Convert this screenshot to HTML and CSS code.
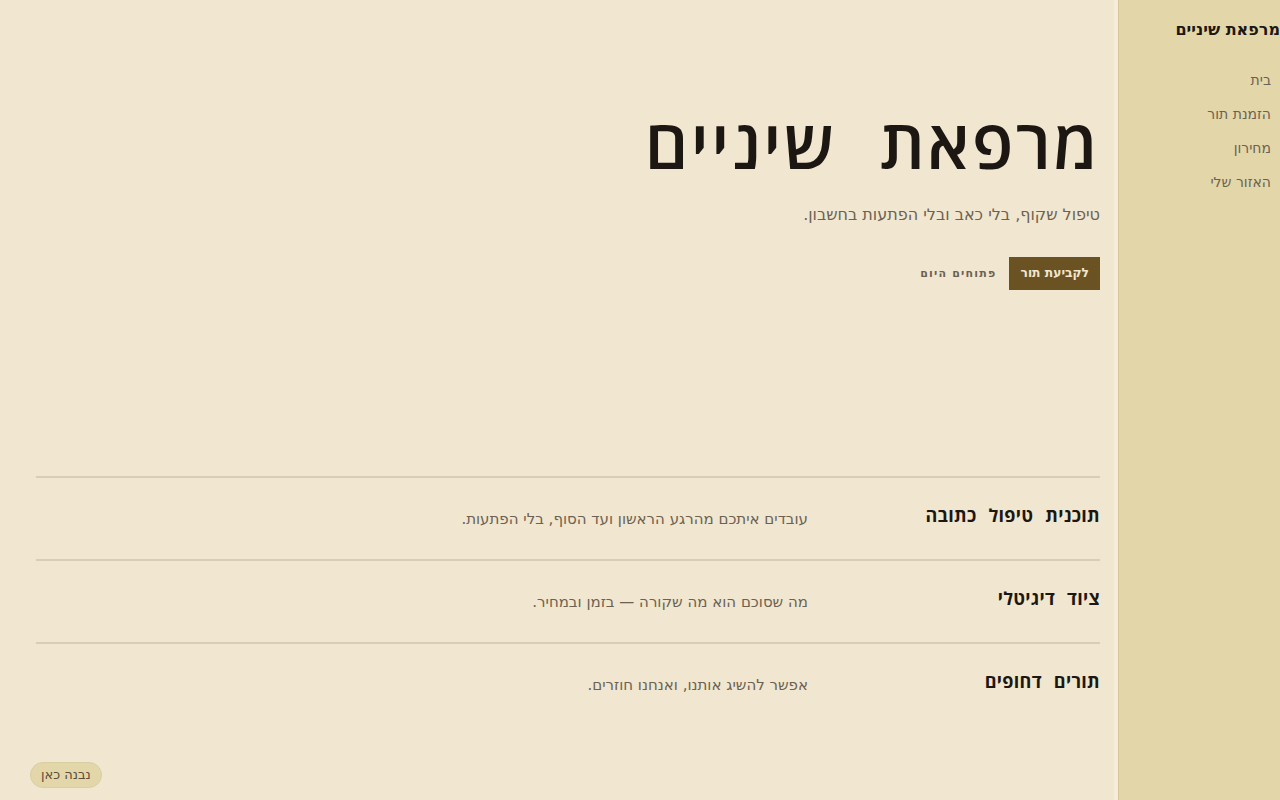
FILE: index.html
```html
<!DOCTYPE html>
<html lang="he" dir="rtl">
<head>
<meta charset="utf-8">
<title>מרפאת שיניים</title>
<link rel="stylesheet" href="styles.css">
</head>
<body>
<div class="layout">
  <aside class="sidebar">
    <div class="brand">מרפאת שיניים</div>
    <nav class="nav">
      <a href="#">בית</a>
      <a href="#">הזמנת תור</a>
      <a href="#">מחירון</a>
      <a href="#">האזור שלי</a>
    </nav>
  </aside>
  <main class="main">
    <section class="hero">
      <h1 class="hero-title">מרפאת שיניים</h1>
      <p class="hero-sub">טיפול שקוף, בלי כאב ובלי הפתעות בחשבון.</p>
      <div class="hero-actions">
        <a class="btn" href="#">לקביעת תור</a>
        <span class="open">פתוחים היום</span>
      </div>
    </section>
    <section class="features">
      <div class="row">
        <h3 class="row-title">תוכנית טיפול כתובה</h3>
        <p class="row-text">עובדים איתכם מהרגע הראשון ועד הסוף, בלי הפתעות.</p>
      </div>
      <div class="row">
        <h3 class="row-title">ציוד דיגיטלי</h3>
        <p class="row-text">מה שסוכם הוא מה שקורה — בזמן ובמחיר.</p>
      </div>
      <div class="row">
        <h3 class="row-title">תורים דחופים</h3>
        <p class="row-text">אפשר להשיג אותנו, ואנחנו חוזרים.</p>
      </div>
    </section>
  </main>
</div>
<div class="built">נבנה כאן</div>
</body>
</html>
```
FILE: styles.css
```css
* { box-sizing: border-box; }
html, body { margin: 0; padding: 0; }
body {
  font-family: "DejaVu Sans", sans-serif;
  background: #f1e6cf;
  color: #1c1712;
  height: 800px;
  overflow: hidden;
}
.layout {
  display: flex;
  flex-direction: row;
  height: 800px;
}
.sidebar {
  width: 162px;
  flex: 0 0 162px;
  background: #e3d6a9;
  border-left: 1px solid #d5c89f;
  box-shadow: -4px 0 0 #f5ecda;
  padding: 19px 9px 0 0;
}
.brand {
  font-size: 16px;
  font-weight: 700;
  color: #1c1712;
  margin-right: -9px;
  line-height: 22px;
  white-space: nowrap;
}
.nav {
  display: flex;
  flex-direction: column;
  margin-top: 29px;
  gap: 14px;
}
.nav a {
  font-size: 14px;
  line-height: 20px;
  color: #6b6253;
  text-decoration: none;
}
.main {
  flex: 1;
  padding: 0 18px 0 36px;
}
.hero {
  padding-top: 98px;
  height: 476px;
}
.hero-title {
  margin: 0;
  font-family: "Open Sans", "DejaVu Sans", sans-serif;
  font-size: 68px;
  font-weight: 600;
  letter-spacing: 0.035em;
  word-spacing: 0.34em;
  line-height: 90px;
  color: #1c1712;
}
.hero-sub {
  margin: 0;
  margin-top: 15px;
  font-size: 16px;
  line-height: 24px;
  color: #6b6253;
}
.hero-actions {
  display: flex;
  align-items: center;
  gap: 13px;
  margin-top: 30px;
}
.btn {
  display: inline-block;
  background: #6b5223;
  color: #f1e6cf;
  font-size: 12.3px;
  font-weight: 700;
  padding: 0 11px;
  height: 33px;
  line-height: 33px;
  text-decoration: none;
}
.open {
  font-size: 11px;
  font-weight: 700;
  letter-spacing: 0.11em;
  color: #6b6253;
}
.features {
  display: flex;
  flex-direction: column;
}
.row {
  display: grid;
  grid-template-columns: 280px 1fr;
  column-gap: 12px;
  align-items: center;
  border-top: 2px solid #d8cdb5;
  height: 83px;
}
.row-title {
  margin: 0 0 8px 0;
  font-family: "Open Sans", "DejaVu Sans", sans-serif;
  font-size: 18px;
  font-weight: 700;
  letter-spacing: 0.3px;
  word-spacing: 7px;
  color: #1c1712;
}
.row-text {
  margin: 0;
  font-size: 15px;
  color: #6b6253;
}
.built {
  position: fixed;
  left: 30px;
  bottom: 12px;
  height: 26px;
  line-height: 24px;
  padding: 0 10px;
  font-size: 13px;
  color: #5a4e3a;
  background: #e3d6a9;
  border: 1px solid #d9cda2;
  border-radius: 13px;
}
```
